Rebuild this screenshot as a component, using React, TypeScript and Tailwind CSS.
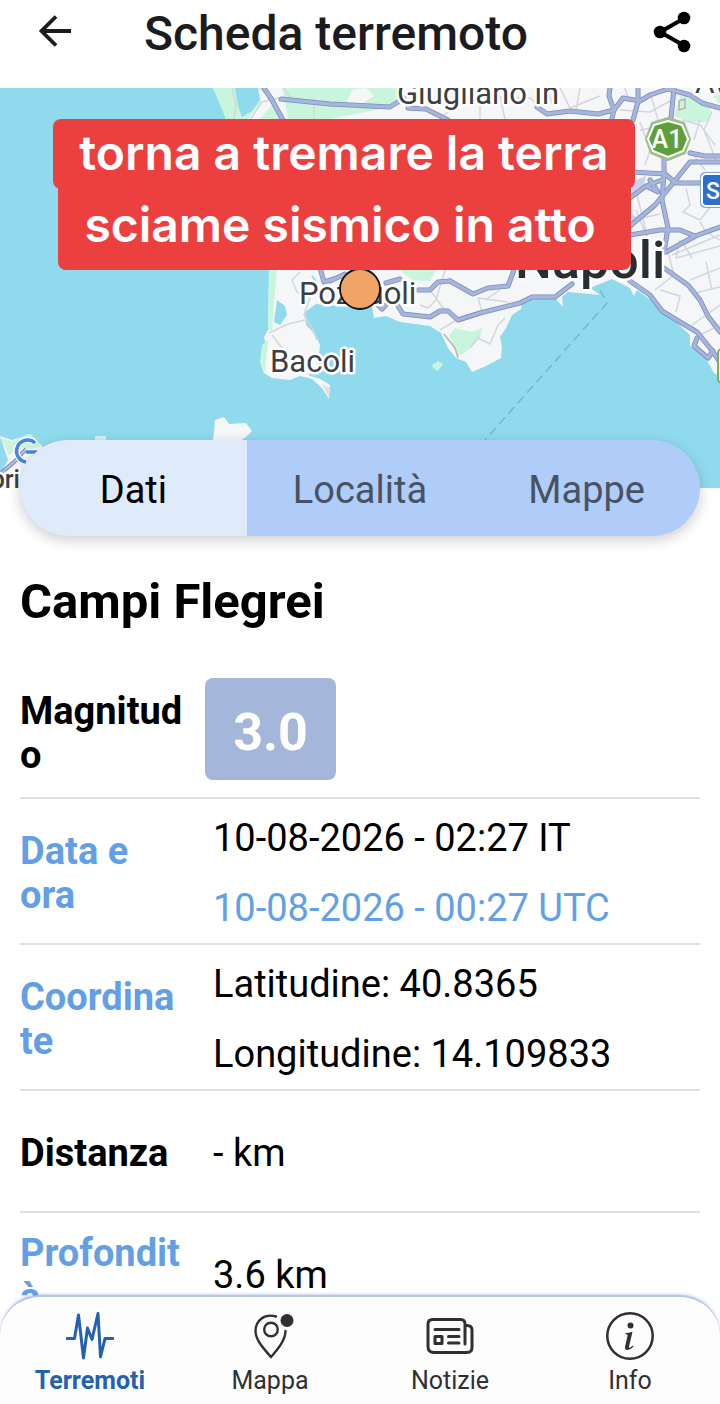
import type { ReactNode } from "react";

const coast =
  "M213 88 L219 100 L226 119 L245 150 L258 200 L269 270 L268 330 L264 337 L266 345 L260 362 L264 373 L272 378 L290 380 L300 376 L312 379 L322 388 L329 399 L330 385 L320 379 L308 375 L318 366 L320 345 L315 334 L306 325 L305 312 L316 304 L340 306 L372 306 L374 318 L386 316 L400 322 L430 326 L441 333 L448 348 L456 358 L466 362 L472 372 L486 366 L501 358 L502 347 L500 337 L506 328 L512 315 L521 309 L522 302 L535 298 L556 299 L563 307 L562 297 L568 292 L600 295 L590 288 L612 279 L622 284 L630 288 L634 296 L637 290 L655 303 L668 315 L690 335 L690 346 L705 357 L714 373 L720 376 V88 Z";

const roads = [
  "M264 88 L272 100 L284 122",
  "M281 99 L330 104 L390 107 L404 98",
  "M408 108 L426 109 L448 120",
  "M537 107 L547 114 L570 111 L598 114 L614 110 L623 98 L640 101 L650 95 L668 89 L690 95 L702 103 L720 108",
  "M610 88 L609 96 L614 110 L611 122",
  "M638 88 L638 102 L633 120",
  "M674 88 L671 118 L664 160 L664 175 L662 200 L668 228 L664 252",
  "M664 268 L688 285 L700 300 L708 316 L720 332",
  "M690 153 L705 156 L720 156",
  "M720 162 L690 162 L674 182 L655 205 L630 226",
  "M632 172 L665 174 L676 183 L702 183",
  "M630 198 L646 186 L662 180 M648 187 L658 192 L650 180",
  "M630 235 L660 230 L680 230 L695 236 L720 227",
  "M695 236 L666 252",
  "M450 281 L473 294 L488 288 L508 286 L514 270",
  "M386 283 L400 279 M418 290 L430 290 L438 282 L450 281",
  "M398 306 L403 314 L430 317 L440 311 L448 311 L458 320 L480 313 L520 303 L532 297 L555 297 L572 284",
  "M320 268 L324 282 L342 276 M330 281 L345 274",
  "M378 305 L382 309 L386 305",
  "M630 281 L650 295 L662 311 L680 322 L697 332 L710 348 L720 362",
  "M697 338 L694 346 L708 358 L713 351",
];

const streets = [
  "M314 98 V119 M284 88 L290 98",
  "M250 120 L262 102 L278 98",
  "M232 88 L236 105 L234 119",
  "M300 272 L292 280 L297 292 L310 298 L304 315 L312 328 L317 340",
  "M269 333 L288 324 L305 320 M272 335 L282 348",
  "M420 305 L428 308 L436 300 L445 270 M440 330 L460 318 M430 290 L446 312",
  "M470 348 L478 338 L490 344 L498 325 L505 318",
  "M478 298 L482 312 M478 298 L508 302 M485 300 L500 290",
  "M440 118 L470 96 L530 98 L545 112 M480 97 V119 M500 97 L505 119",
  "M560 88 L570 108 L600 96 M580 88 L576 110 M548 88 L552 104",
  "M625 88 L628 98 M650 92 L658 120 M620 110 L650 112 L672 100",
  "M640 122 L650 150 L645 165 M640 130 L668 125",
  "M636 210 L650 245 M642 218 L660 214 M648 240 L636 190",
  "M686 188 L690 205 L683 212 L700 220 L712 205 L720 200",
  "M680 240 L676 258 L720 246 M672 255 L720 235",
  "M668 252 L674 275 L655 290 M660 290 L680 296 L676 312",
  "M690 280 L720 268 M695 293 L720 287 M692 325 L720 305 M700 335 L720 325 M712 290 L706 262",
  "M682 120 L700 125 L715 145 M700 120 L694 140 M705 170 L690 150 M712 112 L704 130 L716 160",
  "M692 258 L684 245 L700 236 M700 222 L706 232 L720 240",
];

function HazardMap() {
  return (
    <svg
      className="block h-[400px] w-full bg-[#90daee]"
      viewBox="0 88 720 400"
      preserveAspectRatio="xMidYMid slice"
      role="img"
      aria-label="Mappa: Campi Flegrei"
      fontFamily="Roboto, 'Noto Sans', sans-serif"
    >
      <path d={coast} fill="#f5f6f8" />
      <g fill="#c9f5dd">
        <path d="M213 88 H264 L280 119 H226 Z M282 88 H400 V105 L330 119 H288 Z" />
        <path d="M269 270 H277 L274 300 L272 330 H268 Z M262 345 L268 340 L265 372 L260 362 Z" />
        <path d="M400 270 H436 L430 281 L412 280 Z M449 335 L455 328 L472 332 L482 328 L480 338 L466 352 L458 356 Z" />
        <path d="M680 96 L692 96 L704 102 L712 112 L708 122 L690 122 L674 116 Z" />
        <path d="M432 365 L438 361 L443 364 L438 371 L433 368 Z" />
        <path d="M720 88 H706 L720 104 Z" />
      </g>
      <path d="M256 88 L276 100 L260 119 L248 119 L262 102 Z M352 90 L366 88 L374 96 L360 105 L346 104 Z" fill="#f5f6f8" />
      <path d="M235 88 H258 L260 100 L252 111 L242 117 L238 106 Z M277 300 L285 306 L287 315 L280 325 L274 322 Z" fill="#90daee" />
      <path d="M312 276 L318 284 M306 280 L316 290" stroke="#90daee" strokeWidth="2" />
      <path d="M322 384 L329 398 L330 388 Z" fill="#e9ddd7" />
      <path d="M632 182 L646 176 L644 186 L632 196 Z M632 214 L638 218 L632 224 Z" fill="#cdd0ee" />
      <g fill="none" stroke="#d3d6dc" strokeWidth="1.5" strokeLinejoin="round">
        {streets.map((d) => (
          <path key={d} d={d} />
        ))}
      </g>
      <path d="M679 101 L685 99 L685 108 L679 110 Z M444 334 L455 348 L458 358" fill="none" stroke="#b8b3ae" strokeWidth="1.5" />
      <g fill="none" strokeLinejoin="round" strokeLinecap="round">
        {roads.map((d) => (
          <path key={d} d={d} stroke="#7c8cbd" strokeWidth="5" />
        ))}
        {roads.map((d) => (
          <path key={d} d={d} stroke="#a6b5dc" strokeWidth="3.4" />
        ))}
      </g>
      <path d="M600 290 L607 303 L485 440" fill="none" stroke="#6fb9d4" strokeWidth="1.5" strokeDasharray="9 5" />
      <path d="M213 441 L215 420 L224 417 L229 424 L246 423 L252 431 L246 437 L240 441 Z" fill="#f5f6f8" />
      <path d="M95 436 H106 V442 H95 Z" fill="#d4eff5" />
      <path d="M0 436 L12 440 L30 434 L42 446 L60 488 H0 V474 L8 460 Z" fill="#f5f6f8" />
      <path d="M0 438 L12 441 L30 434 L42 446 L28 450 L16 446 L10 456 Z" fill="#cdf3df" />
      <path d="M0 474 L14 462 L26 449" fill="none" stroke="#7485b8" strokeWidth="4" />
      <path d="M0 474 L14 462 L26 449" fill="none" stroke="#b9bfe0" strokeWidth="2" />
      <path d="M35 443 A11 11 0 1 0 26 462 M36 452 H26" fill="none" stroke="#fff" strokeWidth="6" />
      <path d="M35 443 A11 11 0 1 0 26 462 M37 452 H26" fill="none" stroke="#4284ea" strokeWidth="3.5" />
      <g fill="#3c4043" stroke="#fff" strokeWidth="5" strokeLinejoin="round" paintOrder="stroke">
        <text x="397" y="104" fontSize="31">Giugliano in</text>
        <text x="695" y="93" fontSize="30">Av</text>
        <text x="299" y="304" fontSize="31">Pozzuoli</text>
        <text x="270" y="372" fontSize="31">Bacoli</text>
        <text x="20" y="488" fontSize="25" textAnchor="end" fontWeight="500">Capri</text>
        <text x="515" y="278" fontSize="52" fontWeight="500" fill="#2b2e31">Napoli</text>
      </g>
      <path d="M668 118 L684 123 L690 139 L685 153 L668 160 L651 153 L646 139 L652 123 Z" fill="#8fb97a" stroke="#9dbf8a" strokeWidth="2" strokeLinejoin="round" />
      <path d="M668 121 L682 125 L688 139 L683 151 L668 157 L653 151 L648 139 L654 125 Z" fill="#5f9f3b" stroke="#fff" strokeWidth="2" strokeLinejoin="round" />
      <text x="667" y="148" fontSize="25" fontWeight="500" fill="#fff" textAnchor="middle">A1</text>
      <rect x="700" y="172" width="40" height="36" rx="5" fill="#7fa6dc" />
      <rect x="702" y="174" width="40" height="32" rx="4" fill="#2c70cf" stroke="#fff" strokeWidth="2" />
      <text x="706" y="199" fontSize="23" fontWeight="500" fill="#fff">S</text>
      <rect x="718" y="349" width="20" height="34" rx="4" fill="#fff" stroke="#7db04f" strokeWidth="2" />
      <circle cx="360" cy="289" r="20" fill="#f0a465" stroke="#111" strokeWidth="1.8" />
    </svg>
  );
}

function Row({ label, blue, className, children }: { label: string; blue?: boolean; className: string; children: ReactNode }) {
  return (
    <tr className={className}>
      <th
        scope="row"
        className={`border-b-2 border-[#dedfe0] pt-1 pr-5 text-left align-middle text-[38px] leading-[44px] font-bold wrap-anywhere ${blue ? "text-[#639fe7]" : "text-black"}`}
      >
        {label}
      </th>
      <td className="border-b-2 border-[#dedfe0] pt-1 pl-2 align-middle text-[38px] leading-[70px] font-normal text-black">{children}</td>
    </tr>
  );
}

const iconBox = "size-12";

const items = [
  {
    label: "Terremoti",
    active: true,
    icon: (
      <svg className={iconBox} viewBox="0 0 48 48" fill="none" stroke="currentColor" strokeWidth="3" strokeLinejoin="round" strokeLinecap="round">
        <path d="M1 26.500 H8.500 L12.500 3 L17.500 46 L21.500 16 L26 27.500 L32 1.500 L34.500 45 L39 26.500 H47" />
      </svg>
    ),
  },
  {
    label: "Mappa",
    icon: (
      <svg className={iconBox} viewBox="0 0 48 48" fill="none" stroke="currentColor" strokeWidth="2.400" strokeLinecap="round">
        <path d="M30 4.500 C18 1 9.500 9 9.500 19 C9.500 28 18 37 25 45 C32 37 39.500 28 39.500 19" />
        <circle cx="25" cy="17.500" r="6.800" />
        <circle cx="41" cy="8.500" r="6.500" fill="currentColor" stroke="none" />
      </svg>
    ),
  },
  {
    label: "Notizie",
    icon: (
      <svg className={iconBox} viewBox="0 0 48 48" fill="none" stroke="currentColor" strokeWidth="3" strokeLinecap="round" strokeLinejoin="round">
        <path d="M39 32 V12 Q39 7.500 34.500 7.500 H6.500 Q2 7.500 2 12 V34.500 Q2 40.500 8 40.500 H41 Q46 40.500 46 35.500 V18 Q46 13.500 41 13.500 H39" />
        <path d="M9 17.500 H33 M22.500 24.500 H33 M22.500 31 H33" />
        <rect x="9" y="24.500" width="7" height="7" />
      </svg>
    ),
  },
  {
    label: "Info",
    icon: (
      <svg className={iconBox} viewBox="0 0 48 48" fill="none" stroke="currentColor" strokeWidth="2.500">
        <circle cx="24" cy="24" r="22.700" />
        <circle cx="24.500" cy="13.500" r="3" fill="currentColor" stroke="none" />
        <path d="M19.500 21 Q23 21 26.500 19.800 L23 34.500 Q22.800 36.200 24.300 35.500 L27 33.500 L27.500 34.500 Q24 38.500 20.800 38 Q18.300 37.500 19.200 34 L21.500 24 Q22 22 19.500 22 Z" fill="currentColor" stroke="none" />
      </svg>
    ),
  },
];

export default function App() {
  return (
    <div className="relative h-screen overflow-hidden bg-white font-['Roboto','Noto_Sans',sans-serif]">
      <div className="h-full overflow-y-auto pb-28 [scrollbar-width:none]">
        <header className="flex h-[88px] items-start pr-6 pl-8 text-[#1c1c1e]">
          <button type="button" aria-label="Indietro" className="mt-2 size-12">
            <svg className="size-12" viewBox="0 0 48 48" fill="none" stroke="currentColor" strokeWidth="3.8">
              <path d="M24 8.500 L9.500 23 L24 37.500 M9.500 23 H39" />
            </svg>
          </button>
          <h1 className="ml-16 grow pt-1 text-[48px] leading-[60px] font-medium">Scheda terremoto</h1>
          <button type="button" aria-label="Condividi" className="mt-2 size-12 text-black">
            <svg className="size-12" viewBox="0 0 48 48" fill="currentColor">
              <path d="M36 10.500 L12 24 L36 37.500" fill="none" stroke="currentColor" strokeWidth="4" />
              <circle cx="36" cy="10" r="6.300" />
              <circle cx="12" cy="24" r="6.300" />
              <circle cx="36" cy="38" r="6.300" />
            </svg>
          </button>
        </header>

        <section className="relative">
          <HazardMap />
          <p className="absolute top-[31px] left-[53px] flex flex-col items-center text-[48px] font-semibold whitespace-nowrap text-white font-['Inter',sans-serif]">
            <span className="h-[70px] w-[582px] rounded-lg bg-[#ec4040] text-center leading-[68px]">torna a tremare la terra</span>
            <span className="-mt-2 h-[89px] w-[573px] rounded-lg bg-[#ec4040] pr-2 text-center leading-[88px]">sciame sismico in atto</span>
          </p>
        </section>

        <div role="tablist" className="relative mx-5 -mt-12 grid h-24 grid-cols-3 overflow-hidden rounded-full bg-[#afcdf8] text-[38px] text-[#4a5261] shadow-[0_4px_14px_rgba(0,0,0,0.2)]">
          <button type="button" role="tab" aria-selected="true" className="bg-[#dfebfa] pt-1 text-black">Dati</button>
          <button type="button" role="tab" aria-selected="false" className="pt-1">Località</button>
          <button type="button" role="tab" aria-selected="false" className="pt-1">Mappe</button>
        </div>

        <main className="px-5 pt-9">
          <h2 className="text-[49px] leading-[60px] font-bold text-black">Campi Flegrei</h2>
          <table className="mt-7 w-full table-fixed border-separate border-spacing-0">
            <colgroup>
              <col className="w-[185px]" />
              <col />
            </colgroup>
            <tbody>
              <tr className="h-[139px]">
                <th scope="row" className="border-b-2 border-[#dedfe0] pt-2 pr-5 text-left align-middle text-[38px] leading-[44px] font-bold wrap-anywhere text-black">Magnitudo</th>
                <td className="border-b-2 border-[#dedfe0] align-middle">
                  <span className="flex h-[102px] w-[131px] items-center justify-center rounded-lg bg-[#a4b7da] pt-2 text-[52px] font-bold text-white">3.0</span>
                </td>
              </tr>
              <Row label="Data e ora" blue className="h-[146px]">
                <p>10-08-2026 - 02:27 IT</p>
                <p className="text-[#639fe7]">10-08-2026 - 00:27 UTC</p>
              </Row>
              <Row label="Coordinate" blue className="h-[146px]">
                <p>Latitudine: 40.8365</p>
                <p>Longitudine: 14.109833</p>
              </Row>
              <Row label="Distanza" className="h-[122px]">- km</Row>
              <Row label="Profondità" blue className="h-[122px]">3.6 km</Row>
            </tbody>
          </table>
        </main>
      </div>

      <nav className="absolute inset-x-0 bottom-0 grid h-[109px] grid-cols-4 rounded-t-[40px] border-t-2 border-[#b8c6e6] bg-[#fdfdfe] shadow-[0_-1px_3px_rgba(120,150,220,0.4)]">
        {items.map(({ label, icon, active }) => (
          <a
            key={label}
            href="#"
            aria-current={active ? "page" : undefined}
            className={`flex flex-col items-center pt-[15px] text-[25px] leading-[42px] ${active ? "font-bold text-[#2461af]" : "text-[#303032]"}`}
          >
            {icon}
            {label}
          </a>
        ))}
      </nav>
    </div>
  );
}
